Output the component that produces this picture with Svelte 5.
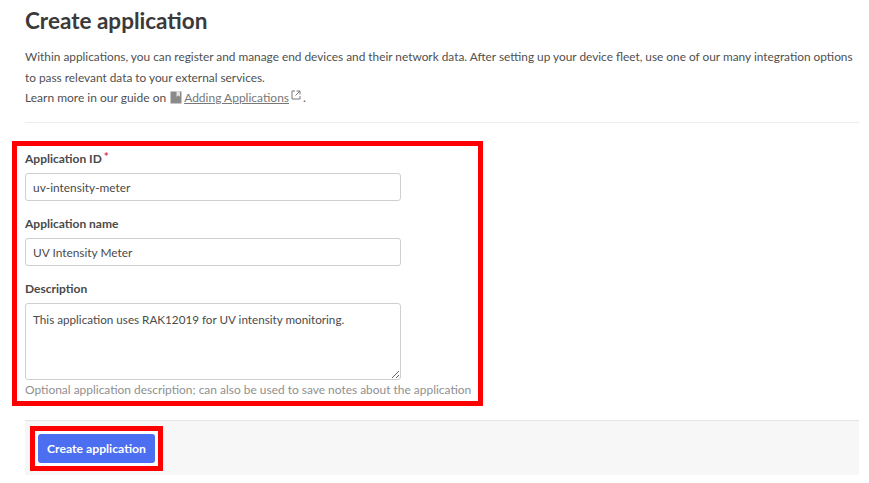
<script>
	let appId = 'uv-intensity-meter';
	let appName = 'UV Intensity Meter';
	let description = 'This application uses RAK12019 for UV intensity monitoring.';
</script>

<div class="page">
	<h1>Create application</h1>
	<p class="intro">
		Within applications, you can register and manage end devices and their network data. After setting up your device fleet, use one of our many integration options to pass relevant data to your external services.
	</p>
	<div class="learn">Learn more in our guide on
		<svg class="book" viewBox="0 0 12 13" width="12" height="13" aria-hidden="true">
			<path d="M0.5 0.5h11v12h-11z" fill="#8a8a8a" />
			<path d="M6.5 0.5h3.4v5.2l-1.7-1.2-1.7 1.2z" fill="#e4e4e4" />
		</svg>
		<a href="#guide">Adding Applications</a>
		<svg class="ext" viewBox="0 0 10 10" width="10" height="10" aria-hidden="true">
			<path d="M4 1H1v8h8V6M5.5 1H9v3.5M9 1L4.5 5.5" fill="none" stroke="#777" stroke-width="1" />
		</svg>.
	</div>
	<hr />

	<form>
		<div class="fields">
			<label for="app-id">Application ID<span class="req">*</span></label>
			<input id="app-id" type="text" value={appId} />

			<label for="app-name">Application name</label>
			<input id="app-name" type="text" value={appName} />

			<label for="app-desc">Description</label>
			<textarea id="app-desc" value={description}></textarea>
			<div class="help">Optional application description; can also be used to save notes about the application</div>
		</div>

		<div class="footer">
			<div class="btn-mark">
				<button type="button">Create application</button>
			</div>
		</div>
	</form>
</div>

<style>
	:global(body) {
		background: #fff;
		font-family: Lato, 'Noto Sans', sans-serif;
		color: #3f3f3f;
	}

	.page {
		width: 834px;
		margin-left: 25px;
	}

	h1 {
		margin: 7px 0 0;
		font-size: 22.5px;
		line-height: 27px;
		font-weight: 700;
		color: #3a3a3a;
	}

	.intro {
		margin: 12px 0 0;
		font-size: 11.85px;
		line-height: 21px;
		color: #4f4f4f;
	}

	.learn {
		display: flex;
		align-items: center;
		gap: 4px;
		font-size: 12px;
		line-height: 19px;
		color: #4f4f4f;
	}

	.book {
		margin-right: -2px;
	}

	.ext {
		margin: -5px -2px 0 -2px;
	}

	a {
		color: #777;
		text-decoration: underline;
	}

	hr {
		margin: 15px 0 0;
		border: 0;
		border-top: 1px solid #ececec;
	}

	.fields {
		box-sizing: border-box;
		display: flex;
		flex-direction: column;
		align-items: flex-start;
		width: 471px;
		height: 265px;
		margin: 18px 0 0 -13px;
		padding: 5px 0 0 8px;
		border: 5px solid #f00;
	}

	label {
		font-size: 12px;
		font-weight: 700;
		line-height: 16px;
		color: #4a4a4a;
		margin-bottom: 6px;
	}

	.req {
		color: #d9394a;
		margin-left: 2px;
		position: relative;
		top: -2px;
		font-size: 12px;
	}

	input,
	textarea {
		box-sizing: border-box;
		width: 376px;
		padding: 0 7px;
		border: 1px solid #cfcfcf;
		border-radius: 3px;
		background: #fff;
		font-family: inherit;
		font-size: 11.9px;
		color: #4a4a4a;
		margin: 0;
		display: block;
	}

	input {
		height: 28px;
		margin-bottom: 15px;
	}

	textarea {
		height: 77px;
		padding-top: 6px;
		font-size: 11.7px;
		line-height: 18px;
		resize: vertical;
	}

	.help {
		margin-top: 2px;
		font-size: 11.95px;
		line-height: 16px;
		color: #8f8f8f;
		white-space: nowrap;
	}

	.footer {
		box-sizing: border-box;
		height: 55px;
		margin-top: 14px;
		padding: 5px;
		background: #f7f7f7;
		border-top: 1px solid #e4e4e4;
	}

	.btn-mark {
		display: inline-block;
		padding: 3px;
		border: 5px solid #f00;
		background: #fff;
	}

	button {
		display: block;
		width: 117px;
		height: 29px;
		padding: 0;
		border: 0;
		border-radius: 3px;
		background: #4c6ef0;
		color: #fff;
		font-family: inherit;
		font-size: 12.2px;
		font-weight: 700;
	}
</style>
